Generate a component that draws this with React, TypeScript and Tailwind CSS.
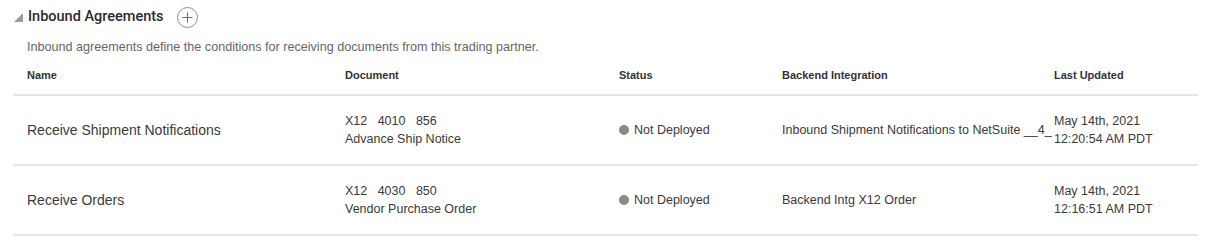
import React from "react";

const rows = [
  {
    name: "Receive Shipment Notifications",
    doc1: "X12\u00a0\u00a0\u00a04010\u00a0\u00a0\u00a0856",
    doc2: "Advance Ship Notice",
    status: "Not Deployed",
    backend: "Inbound Shipment Notifications to NetSuite __4_",
    date: "May 14th, 2021",
    time: "12:20:54 AM PDT",
  },
  {
    name: "Receive Orders",
    doc1: "X12\u00a0\u00a0\u00a04030\u00a0\u00a0\u00a0850",
    doc2: "Vendor Purchase Order",
    status: "Not Deployed",
    backend: "Backend Intg X12 Order",
    date: "May 14th, 2021",
    time: "12:16:51 AM PDT",
  },
];

const cols = "grid grid-cols-[318px_274px_163px_272px_158px]";

export default function App() {
  return (
    <div
      className="w-[1215px] h-[242px] bg-white text-[#333]"
      style={{ fontFamily: '"Liberation Sans", Arial, sans-serif' }}
    >
      <div className="h-[34px] flex items-center pl-[14px]">
        <svg width="9" height="9" viewBox="0 0 9 9" className="mr-[5px] mt-[1px]">
          <polygon points="9,0 9,9 0,9" fill="#9a9a9a" />
        </svg>
        <span
          className="text-[14.5px] font-medium text-[#2b2b2b]"
          style={{ fontFamily: "Roboto, Arial, sans-serif" }}
        >
          Inbound Agreements
        </span>
        <span className="ml-[13px] w-[21px] h-[21px] rounded-full border border-[#8c8c8c] flex items-center justify-center">
          <svg width="11" height="11" viewBox="0 0 11 11">
            <path d="M5.5 0.5 V10.5 M0.5 5.5 H10.5" stroke="#6e6e6e" strokeWidth="1.1" />
          </svg>
        </span>
      </div>
      <div className="h-[25px] flex items-center pl-[27px] pt-[2px] text-[12.6px] text-[#666]">
        Inbound agreements define the conditions for receiving documents from this trading partner.
      </div>
      <div className="ml-[13px] w-[1185px]">
        <div className={`${cols} h-[37px] pt-[8px] text-[11px] font-bold text-[#333] border-b-2 border-[#e6e6e6]`}>
          <div className="pl-[14px]">Name</div>
          <div className="pl-[14px]">Document</div>
          <div className="pl-[14px]">Status</div>
          <div className="pl-[14px]">Backend Integration</div>
          <div className="pl-[14px]">Last Updated</div>
        </div>
        {rows.map((r) => (
          <div
            key={r.name}
            className={`${cols} h-[70px] items-center border-b-2 border-[#e6e6e6] text-[#3a3a3a]`}
          >
            <div className="pl-[14px] text-[14px]">{r.name}</div>
            <div className="pl-[14px] text-[12.5px] leading-[18px]">
              <div>{r.doc1}</div>
              <div>{r.doc2}</div>
            </div>
            <div className="pl-[14px] text-[12.5px] flex items-center">
              <span className="w-[10px] h-[10px] rounded-full bg-[#8a8a8a] mr-[5px]" />
              {r.status}
            </div>
            <div className="pl-[14px] text-[12.5px] whitespace-nowrap">{r.backend}</div>
            <div className="pl-[14px] text-[12.5px] leading-[18px]">
              <div>{r.date}</div>
              <div>{r.time}</div>
            </div>
          </div>
        ))}
      </div>
    </div>
  );
}
